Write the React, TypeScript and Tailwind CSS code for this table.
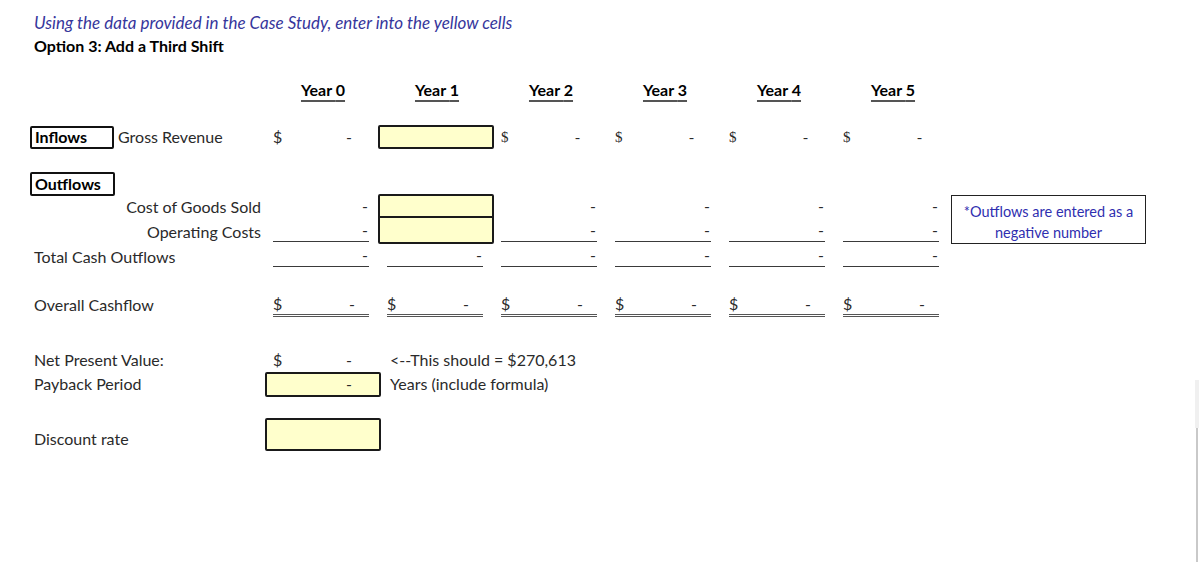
// Feuille "Option 3" — tableau de flux de trésorerie façon Excel
import type { ReactNode } from "react";

const YEARS = [0, 1, 2, 3, 4, 5];
const LINE = "border-[#3a3a3a]";

function AcctCell({ serif = false }: { serif?: boolean }) {
  return (
    <div
      className={`flex w-[114px] justify-between pl-[7px] pr-[28px] ${
        serif ? "font-['Liberation_Serif',serif] text-[15px]" : ""
      }`}
    >
      <span>$</span>
      <span>-</span>
    </div>
  );
}

function DashCell({ lined = false, col }: { lined?: boolean; col: string }) {
  return (
    <div className={`${col} flex`}>
      <div
        className={`ml-[7px] flex h-[23px] w-[96px] items-center justify-end pr-[1px] ${
          lined ? `border-b ${LINE}` : ""
        }`}
      >
        -
      </div>
    </div>
  );
}

function Row({ children, className = "" }: { children: ReactNode; className?: string }) {
  return <div className={`flex items-center ${className}`}>{children}</div>;
}

export default function App() {
  return (
    <div className="relative h-[562px] w-[1199px] overflow-hidden bg-white font-['Lato','Open_Sans',sans-serif] text-[16px] leading-[20px] text-[#2a2a2a]">
      {/* Consigne */}
      <div className="pl-[34px] pt-[11px] leading-[23px]">
        <p className="text-[17px] italic text-[#36369c]">
          Using the data provided in the Case Study, enter into the yellow cells
        </p>
        <p className="font-bold text-black">Option 3: Add a Third Shift</p>
      </div>

      {/* En-têtes années */}
      <Row className="mt-[21px] h-[24px]">
        <div className="w-[266px]" />
        {YEARS.map((y) => (
          <div key={y} className="w-[114px] text-center">
            <span className="font-bold text-black underline decoration-[#555] decoration-[2px] underline-offset-[4px]">
              Year {y}
            </span>
          </div>
        ))}
      </Row>

      {/* Inflows */}
      <Row className="mt-[23px] h-[24px]">
        <div className="flex w-[266px] items-center pl-[30px]">
          <span className="flex h-[23px] w-[84px] items-center rounded-[2px] border-2 border-[#111] pl-[3px] font-bold text-black">
            Inflows
          </span>
          <span className="ml-[4px]">Gross Revenue</span>
        </div>
        <AcctCell />
        <div className="w-[114px]">
          <div className="-ml-[2px] h-[24px] w-[116px] rounded-[2px] border-2 border-[#1a1a1a] bg-[#ffffcc]" />
        </div>
        <AcctCell serif />
        <AcctCell serif />
        <AcctCell serif />
        <AcctCell serif />
      </Row>

      {/* Outflows */}
      <Row className="mt-[23px] h-[22px] items-start">
        <div className="pl-[30px]">
          <span className="flex h-[24px] w-[85px] items-center rounded-[2px] border-2 border-[#111] pl-[3px] font-bold text-black">
            Outflows
          </span>
        </div>
      </Row>

      <div className="grid grid-cols-[266px_repeat(6,114px)_auto] grid-rows-[25px_25px_25px]">
        <div className="col-start-1 row-start-1 flex items-center justify-end pr-[5px]">
          Cost of Goods Sold
        </div>
        <DashCell col="col-start-2 row-start-1" />
        <div className="col-start-3 row-start-1 row-span-2 -ml-[2px] flex flex-col rounded-[2px] border-2 border-[#1a1a1a] bg-[#ffffcc]">
          <div className="h-[22px] border-b-2 border-[#1a1a1a]" />
        </div>
        <DashCell col="col-start-4 row-start-1" />
        <DashCell col="col-start-5 row-start-1" />
        <DashCell col="col-start-6 row-start-1" />
        <DashCell col="col-start-7 row-start-1" />
        <div className="col-start-8 row-start-1 row-span-2 ml-[1px] mt-[1px] flex h-[49px] w-[195px] flex-col border border-[#222] pt-[5px] text-center text-[14.5px] leading-[21px] text-[#2f2fb0]">
          <span>*Outflows are entered as a</span>
          <span>negative number</span>
        </div>

        <div className="col-start-1 row-start-2 flex items-center justify-end pr-[5px]">
          Operating Costs
        </div>
        <DashCell lined col="col-start-2 row-start-2" />
        <DashCell lined col="col-start-4 row-start-2" />
        <DashCell lined col="col-start-5 row-start-2" />
        <DashCell lined col="col-start-6 row-start-2" />
        <DashCell lined col="col-start-7 row-start-2" />

        <div className="col-start-1 row-start-3 flex items-center pl-[34px]">Total Cash Outflows</div>
        <DashCell lined col="col-start-2 row-start-3" />
        <DashCell lined col="col-start-3 row-start-3" />
        <DashCell lined col="col-start-4 row-start-3" />
        <DashCell lined col="col-start-5 row-start-3" />
        <DashCell lined col="col-start-6 row-start-3" />
        <DashCell lined col="col-start-7 row-start-3" />
      </div>

      {/* Overall Cashflow */}
      <Row className="mt-[24px] h-[24px]">
        <div className="w-[266px] pl-[34px]">Overall Cashflow</div>
        {YEARS.map((y) => (
          <div key={y} className="flex w-[114px]">
            <div className="ml-[7px] flex h-[24px] w-[96px] items-center justify-between border-b-[3px] border-double border-[#555] pr-[14px]">
              <span>$</span>
              <span>-</span>
            </div>
          </div>
        ))}
      </Row>

      {/* NPV / Payback */}
      <Row className="mt-[31px] h-[24px]">
        <div className="w-[266px] pl-[34px]">Net Present Value:</div>
        <AcctCell />
        <span className="ml-[10px]">&lt;--This should = $270,613</span>
      </Row>
      <Row className="h-[24px]">
        <div className="w-[266px] pl-[34px]">Payback Period</div>
        <div className="-ml-[1px] flex h-[25px] w-[116px] items-center justify-end rounded-[2px] border-2 border-[#1a1a1a] bg-[#ffffcc] pr-[27px]">
          -
        </div>
        <span className="ml-[9px]">Years (include formula)</span>
      </Row>

      <Row className="mt-[22px] h-[33px] items-stretch">
        <div className="flex w-[266px] items-end pb-[2px] pl-[34px]">Discount rate</div>
        <div className="-ml-[1px] w-[116px] rounded-[2px] border-2 border-[#1a1a1a] bg-[#ffffcc]" />
      </Row>

      {/* bord de la barre de défilement */}
      <div className="absolute right-0 top-[380px] h-[48px] w-[4px] bg-[#f0f0f0]" />
      <div className="absolute right-[1px] top-[428px] h-[134px] w-[2px] bg-[#c9c9c9]" />
    </div>
  );
}
